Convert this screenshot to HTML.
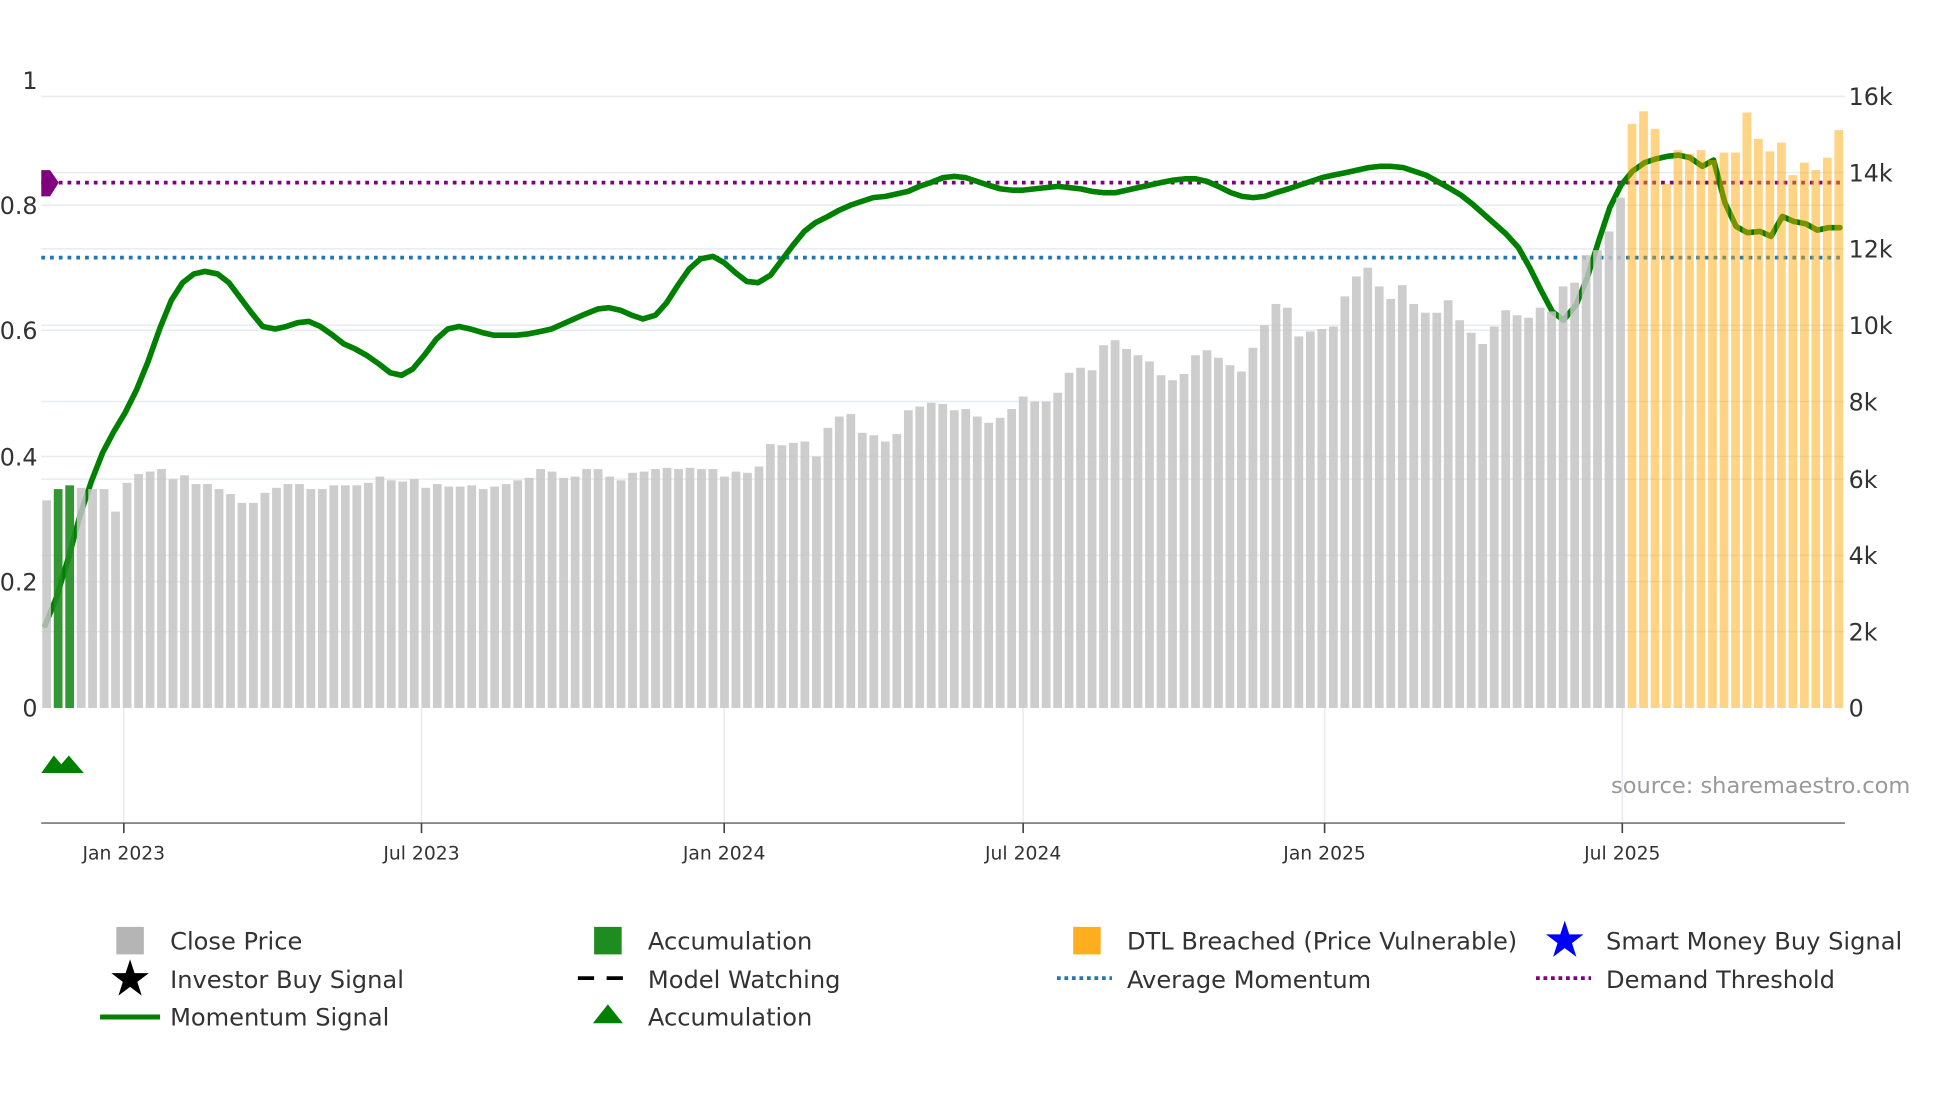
<!DOCTYPE html>
<html><head><meta charset="utf-8">
<style>
html,body{margin:0;padding:0;background:#fff;}
svg{display:block;font-family:"DejaVu Sans","Liberation Sans",sans-serif;}
</style></head>
<body>
<svg id="s" width="1960" height="1102" viewBox="0 0 1567 881" preserveAspectRatio="none" xmlns="http://www.w3.org/2000/svg">
<rect width="1567" height="881" fill="#fff"/>
<g stroke="#e8ebf0" stroke-width="1.2">
<line x1="33" x2="1475" y1="77" y2="77"/><line x1="33" x2="1475" y1="138" y2="138"/>
<line x1="33" x2="1475" y1="199" y2="199"/><line x1="33" x2="1475" y1="260" y2="260"/>
<line x1="33" x2="1475" y1="321" y2="321"/><line x1="33" x2="1475" y1="383" y2="383"/>
<line x1="33" x2="1475" y1="444" y2="444"/><line x1="33" x2="1475" y1="505" y2="505"/>
<line x1="33" x2="1475" y1="164" y2="164"/><line x1="33" x2="1475" y1="264" y2="264"/>
<line x1="33" x2="1475" y1="365" y2="365"/><line x1="33" x2="1475" y1="465" y2="465"/>
<line x1="99" x2="99" y1="566" y2="658"/><line x1="337" x2="337" y1="566" y2="658"/>
<line x1="579" x2="579" y1="566" y2="658"/><line x1="818" x2="818" y1="566" y2="658"/>
<line x1="1059" x2="1059" y1="566" y2="658"/><line x1="1297" x2="1297" y1="566" y2="658"/>
</g>
<line x1="33" x2="1475" y1="146" y2="146" stroke="#800080" stroke-width="3" stroke-dasharray="3,4"/>
<line x1="33" x2="1475" y1="206" y2="206" stroke="#1f77b4" stroke-width="3" stroke-dasharray="3,4"/>
<path id="mline" fill="none" stroke="#008000" stroke-width="4.5" stroke-linejoin="round" stroke-linecap="round"/>
<g id="bars"></g>
<polygon points="33,136 40,136 47,146 40,157 33,157" fill="#800080"/>
<polygon points="33,618 43,604 49,611 55,604 67,618" fill="#008000"/>
<line x1="33" x2="1475" y1="658" y2="658" stroke="#888" stroke-width="1.5"/>
<g stroke="#444" stroke-width="1.3">
<line x1="99" x2="99" y1="658" y2="666"/><line x1="337" x2="337" y1="658" y2="666"/>
<line x1="579" x2="579" y1="658" y2="666"/><line x1="818" x2="818" y1="658" y2="666"/>
<line x1="1059" x2="1059" y1="658" y2="666"/><line x1="1297" x2="1297" y1="658" y2="666"/>
</g>
<g fill="#333" font-size="15" text-anchor="middle">
<text x="99" y="687">Jan 2023</text><text x="337" y="687">Jul 2023</text>
<text x="579" y="687">Jan 2024</text><text x="818" y="687">Jul 2024</text>
<text x="1059" y="687">Jan 2025</text><text x="1297" y="687">Jul 2025</text>
</g>
<g fill="#333" font-size="19" text-anchor="end">
<text x="30" y="71">1</text><text x="30" y="171">0.8</text><text x="30" y="271">0.6</text>
<text x="30" y="372">0.4</text><text x="30" y="472">0.2</text><text x="30" y="573">0</text>
</g>
<g fill="#333" font-size="19">
<text x="1478" y="84">16k</text><text x="1478" y="145">14k</text><text x="1478" y="206">12k</text>
<text x="1478" y="267">10k</text><text x="1478" y="328">8k</text><text x="1478" y="390">6k</text>
<text x="1478" y="451">4k</text><text x="1478" y="512">2k</text><text x="1478" y="573">0</text>
</g>
<text x="1288" y="634" fill="#999" font-size="18">source: sharemaestro.com</text>
<g font-size="19.3" fill="#333">
<rect x="93" y="741" width="22" height="22" fill="#b5b5b5"/><text x="136" y="759">Close Price</text>
<polygon points="104,767 107.6,778 119,778 109.8,785 113.3,796 104,789 94.7,796 98.2,785 89,778 100.4,778" fill="#000"/><text x="136" y="790">Investor Buy Signal</text>
<line x1="80" x2="128" y1="813" y2="813" stroke="#008000" stroke-width="4"/><text x="136" y="820">Momentum Signal</text>
<rect x="475" y="741" width="22" height="22" fill="#1e8c1e"/><text x="518" y="759">Accumulation</text>
<line x1="462" x2="506" y1="782" y2="782" stroke="#000" stroke-width="3" stroke-dasharray="13,10"/><text x="518" y="790">Model Watching</text>
<polygon points="474,818 486,803 498,818" fill="#008000"/><text x="518" y="820">Accumulation</text>
<rect x="858" y="741" width="22" height="22" fill="#ffae1f"/><text x="901" y="759">DTL Breached (Price Vulnerable)</text>
<line x1="845" x2="889" y1="782" y2="782" stroke="#1f77b4" stroke-width="3" stroke-dasharray="3,3"/><text x="901" y="790">Average Momentum</text>
<polygon points="1251,736 1254.6,747 1266,747 1256.8,754 1260.3,765 1251,758 1241.7,765 1245.2,754 1236,747 1247.4,747" fill="#0000ff"/><text x="1284" y="759">Smart Money Buy Signal</text>
<line x1="1228" x2="1272" y1="782" y2="782" stroke="#800080" stroke-width="3" stroke-dasharray="3,3"/><text x="1284" y="790">Demand Threshold</text>
</g>
</svg>
<script>
var tops=[400,391,388,390,391,391,409,386,379,377,375,383,380,387,387,391,395,402,402,394,390,387,387,391,391,388,388,388,386,381,384,385,383,390,387,389,389,388,391,389,387,384,382,375,377,382,381,375,375,381,384,378,377,375,374,375,374,375,375,381,377,378,373,355,356,354,353,365,342,333,331,346,348,353,347,328,325,322,323,328,327,333,338,334,327,317,321,321,314,298,294,296,276,272,279,284,289,300,304,299,284,280,286,292,297,278,260,243,246,269,265,263,261,237,221,214,229,239,228,243,250,250,240,256,266,275,261,248,252,254,246,249,229,226,204,200,185,158,
99,89,103,147,120,123,120,128,122,122,90,111,121,114,140,130,136,126,104];
var N=tops.length,x0=33,x1=1475,step=(x1-x0)/N,g=document.getElementById('bars'),h='';
for(var i=0;i<N;i++){var x=x0+i*step+0.8,w=step-2.2;var c,o;
if(i>=N-19){c='#ffa500';o=0.48;}else if(i==1||i==2){c='#1e8c1e';o=0.9;}else{c='#c4c4c4';o=0.85;}
h+='<rect x="'+x.toFixed(1)+'" y="'+tops[i]+'" width="'+w.toFixed(1)+'" height="'+(566-tops[i])+'" fill="'+c+'" fill-opacity="'+o+'"/>';}
g.innerHTML=h;
var p=[[36,500],[45,478],[55,445],[64,412],[73,385],[82,362],[91,345],[100,330],[109,312],[118,290],[128,262],[137,240],[146,226],[155,219],[164,217],[174,219],[183,226],[192,238],[201,250],[210,261],[220,263],[229,261],[238,258],[247,257],[256,261],[266,268],[275,275],[284,279],[293,284],[303,291],[312,298],[321,300],[330,295],[340,283],[349,271],[358,263],[367,261],[376,263],[386,266],[395,268],[404,268],[413,268],[422,267],[432,265],[441,263],[450,259],[459,255],[468,251],[478,247],[487,246],[496,248],[505,252],[514,255],[524,252],[533,242],[542,228],[551,215],[560,207],[570,205],[579,210],[588,218],[597,225],[606,226],[616,220],[625,208],[634,196],[643,185],[652,178],[662,173],[671,168],[680,164],[689,161],[698,158],[708,157],[717,155],[726,153],[735,149],[744,146],[754,142],[763,141],[772,142],[781,145],[790,148],[800,151],[809,152],[818,152],[827,151],[836,150],[846,149],[855,150],[864,151],[873,153],[882,154],[892,154],[901,152],[910,150],[919,148],[928,146],[938,144],[947,143],[956,143],[965,145],[974,149],[984,154],[993,157],[1002,158],[1011,157],[1020,154],[1030,151],[1039,148],[1048,145],[1057,142],[1066,140],[1076,138],[1085,136],[1094,134],[1103,133],[1112,133],[1122,134],[1131,137],[1140,140],[1149,145],[1158,150],[1168,156],[1177,163],[1186,171],[1195,179],[1204,187],[1214,198],[1223,214],[1232,232],[1241,249],[1250,256],[1260,244],[1269,222],[1278,193],[1287,166],[1296,148],[1305,137],[1315,130],[1324,127],[1333,125],[1342,124],[1351,126],[1361,133],[1370,128],[1379,162],[1388,181],[1397,186],[1407,185],[1416,189],[1425,173],[1434,177],[1444,179],[1453,184],[1462,182],[1471,182]];
var d='M'+p[0].join(',');for(var j=1;j<p.length;j++)d+=' L'+p[j].join(',');
document.getElementById('mline').setAttribute('d',d);
</script>
</body></html>
